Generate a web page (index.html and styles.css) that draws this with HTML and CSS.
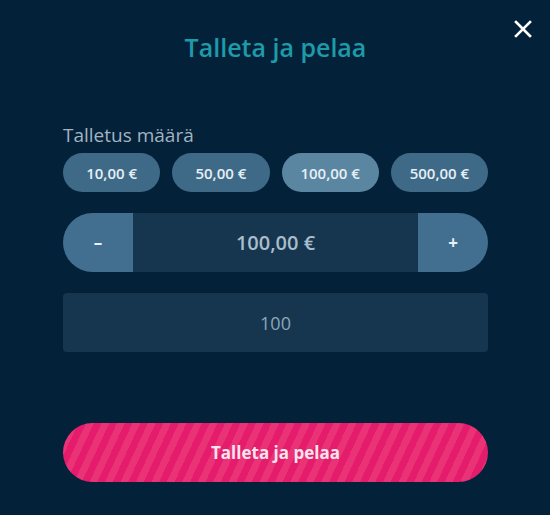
FILE: index.html
```html
<!DOCTYPE html>
<html lang="fi">
<head>
<meta charset="utf-8">
<link rel="stylesheet" href="styles.css">
</head>
<body>
<div class="modal">
  <button class="close" aria-label="Sulje">
    <svg width="18" height="18" viewBox="0 0 18 18"><path d="M2 2 L16 16 M16 2 L2 16" stroke="#ffffff" stroke-width="2.6" stroke-linecap="square"/></svg>
  </button>
  <h1 class="title">Talleta ja pelaa</h1>
  <div class="label">Talletus määrä</div>
  <div class="chips">
    <button class="chip">10,00 €</button>
    <button class="chip">50,00 €</button>
    <button class="chip active">100,00 €</button>
    <button class="chip">500,00 €</button>
  </div>
  <div class="stepper">
    <button class="step minus">–</button>
    <div class="amount">100,00 €</div>
    <button class="step plus">+</button>
  </div>
  <div class="input">100</div>
  <button class="cta">Talleta ja pelaa</button>
</div>
</body>
</html>
```
FILE: styles.css
```css
html, body {
  margin: 0;
  padding: 0;
  background: #03223a;
}
body {
  font-family: "Open Sans", "Noto Sans", sans-serif;
  width: 550px;
  height: 515px;
  overflow: hidden;
}
.modal {
  position: relative;
  padding: 0 62px 0 63px;
  display: flex;
  flex-direction: column;
}
.close {
  position: absolute;
  top: 20px;
  right: 18px;
  background: none;
  border: 0;
  padding: 0;
  width: 18px;
  height: 18px;
  display: flex;
}
.title {
  margin: 32px 0 0;
  text-align: center;
  font-size: 25px;
  line-height: 30px;
  font-weight: 600;
  color: #1e9aa9;
}
.label {
  margin-top: 61px;
  font-size: 19px;
  line-height: 24px;
  color: #a2b3c1;
}
.chips {
  margin-top: 6px;
  display: grid;
  grid-template-columns: repeat(4, 1fr);
  gap: 12px;
}
.chip {
  height: 39px;
  border: 0;
  border-radius: 20px;
  background: #3e6a88;
  color: #e6eff5;
  font-family: inherit;
  font-size: 15px;
  font-weight: 600;
  padding: 0;
}
.chip.active {
  background: #5b86a2;
}
.stepper {
  margin-top: 21px;
  height: 59px;
  display: flex;
}
.step {
  width: 70px;
  border: 0;
  background: #426f8f;
  color: #e8f1f7;
  font-family: inherit;
  font-size: 17px;
  font-weight: 700;
  padding: 0;
}
.minus {
  border-radius: 30px 0 0 30px;
}
.plus {
  border-radius: 0 30px 30px 0;
}
.amount {
  flex: 1;
  background: #15364e;
  display: flex;
  align-items: center;
  justify-content: center;
  color: #a9bdcc;
  font-size: 20px;
  font-weight: 600;
}
.input {
  margin-top: 21px;
  height: 59px;
  background: #15364e;
  border-radius: 4px;
  display: flex;
  align-items: center;
  justify-content: center;
  color: #8ea5b8;
  font-size: 18px;
}
.cta {
  margin-top: 71px;
  height: 59px;
  border: 0;
  border-radius: 30px;
  background: repeating-linear-gradient(115deg, #e51b6c 0, #e51b6c 7px, #ea3276 7px, #ea3276 14px);
  color: #fbe3ee;
  font-family: inherit;
  font-size: 17px;
  font-weight: 700;
  padding: 0;
}
```
